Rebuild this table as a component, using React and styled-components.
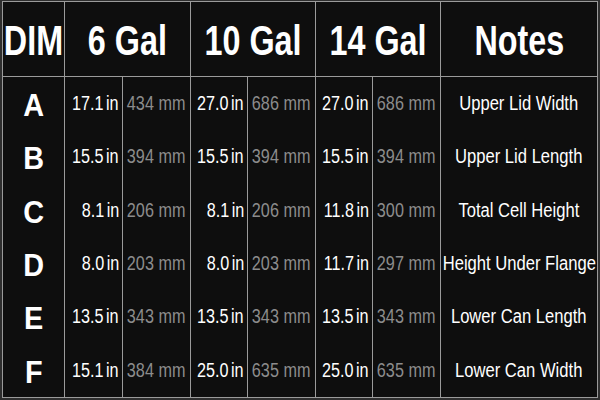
import React from 'react';
import styled, { createGlobalStyle } from 'styled-components';

const LINE = '#9a9a9a';

const rows = [
  { dim: 'A', sizes: [['17.1', '434'], ['27.0', '686'], ['27.0', '686']], note: 'Upper Lid Width' },
  { dim: 'B', sizes: [['15.5', '394'], ['15.5', '394'], ['15.5', '394']], note: 'Upper Lid Length' },
  { dim: 'C', sizes: [['8.1', '206'], ['8.1', '206'], ['11.8', '300']], note: 'Total Cell Height' },
  { dim: 'D', sizes: [['8.0', '203'], ['8.0', '203'], ['11.7', '297']], note: 'Height Under Flange' },
  { dim: 'E', sizes: [['13.5', '343'], ['13.5', '343'], ['13.5', '343']], note: 'Lower Can Length' },
  { dim: 'F', sizes: [['15.1', '384'], ['25.0', '635'], ['25.0', '635']], note: 'Lower Can Width' },
];

const GlobalStyle = createGlobalStyle`
  html, body {
    margin: 0;
    padding: 0;
    background: #2e2e2e;
  }
  body {
    font-family: "Liberation Sans", Arial, sans-serif;
  }
`;

export default function App() {
  return (
    <>
      <GlobalStyle />
      <Table>
        <HeadCell>
          <Narrow $sx={0.77}>DIM</Narrow>
        </HeadCell>
        {['6 Gal', '10 Gal', '14 Gal'].map(g => (
          <HeadCell key={g} $span={2}>
            <Narrow $sx={0.77}>{g}</Narrow>
          </HeadCell>
        ))}
        <HeadCell $last>
          <Narrow $sx={0.77}>Notes</Narrow>
        </HeadCell>

        {rows.map(r => (
          <React.Fragment key={r.dim}>
            <DimCell>
              <Narrow $sx={0.9}>{r.dim}</Narrow>
            </DimCell>
            {r.sizes.map(([inch, mm], i) => (
              <React.Fragment key={i}>
                <InchCell>
                  <Narrow $sx={0.81} $origin="right">
                    {inch}
                    <Unit>in</Unit>
                  </Narrow>
                </InchCell>
                <MmCell>
                  <Narrow $sx={0.81}>{mm} mm</Narrow>
                </MmCell>
              </React.Fragment>
            ))}
            <NoteCell>
              <Narrow $sx={0.83}>{r.note}</Narrow>
            </NoteCell>
          </React.Fragment>
        ))}
      </Table>
    </>
  );
}

const Table = styled.div`
  box-sizing: border-box;
  margin: 1px 0 0 2px;
  width: 596px;
  height: 397px;
  border: 1px solid ${LINE};
  background: #0e0e0e;
  display: grid;
  grid-template-columns: 62px 58px 68px 57px 68px 57px 68px 1fr;
  grid-template-rows: 75px repeat(6, 1fr);
`;

const Cell = styled.div`
  box-sizing: border-box;
  display: flex;
  align-items: center;
  justify-content: center;
  overflow: visible;
  min-width: 0;
  white-space: nowrap;
  border-right: ${p => (p.$last ? 'none' : `1px solid ${LINE}`)};
`;

const HeadCell = styled(Cell)`
  grid-column: span ${p => p.$span || 1};
  border-bottom: 1px solid ${LINE};
  padding-top: 3px;
  color: #ffffff;
  font-size: 42px;
  font-weight: 700;
`;

const DimCell = styled(Cell)`
  padding-top: 4px;
  color: #ffffff;
  font-size: 32px;
  font-weight: 700;
`;

const InchCell = styled(Cell)`
  justify-content: flex-end;
  padding-right: 3px;
  color: #ffffff;
  font-size: 20px;
`;

const MmCell = styled(Cell)`
  color: #8c8c8c;
  font-size: 20px;
`;

const NoteCell = styled(Cell)`
  border-right: none;
  color: #ffffff;
  font-size: 20px;
`;

const Narrow = styled.span`
  display: inline-block;
  flex-shrink: 0;
  transform: scaleX(${p => p.$sx});
  transform-origin: ${p => p.$origin || 'center'} center;
`;

const Unit = styled.span`
  margin-left: 3px;
`;
